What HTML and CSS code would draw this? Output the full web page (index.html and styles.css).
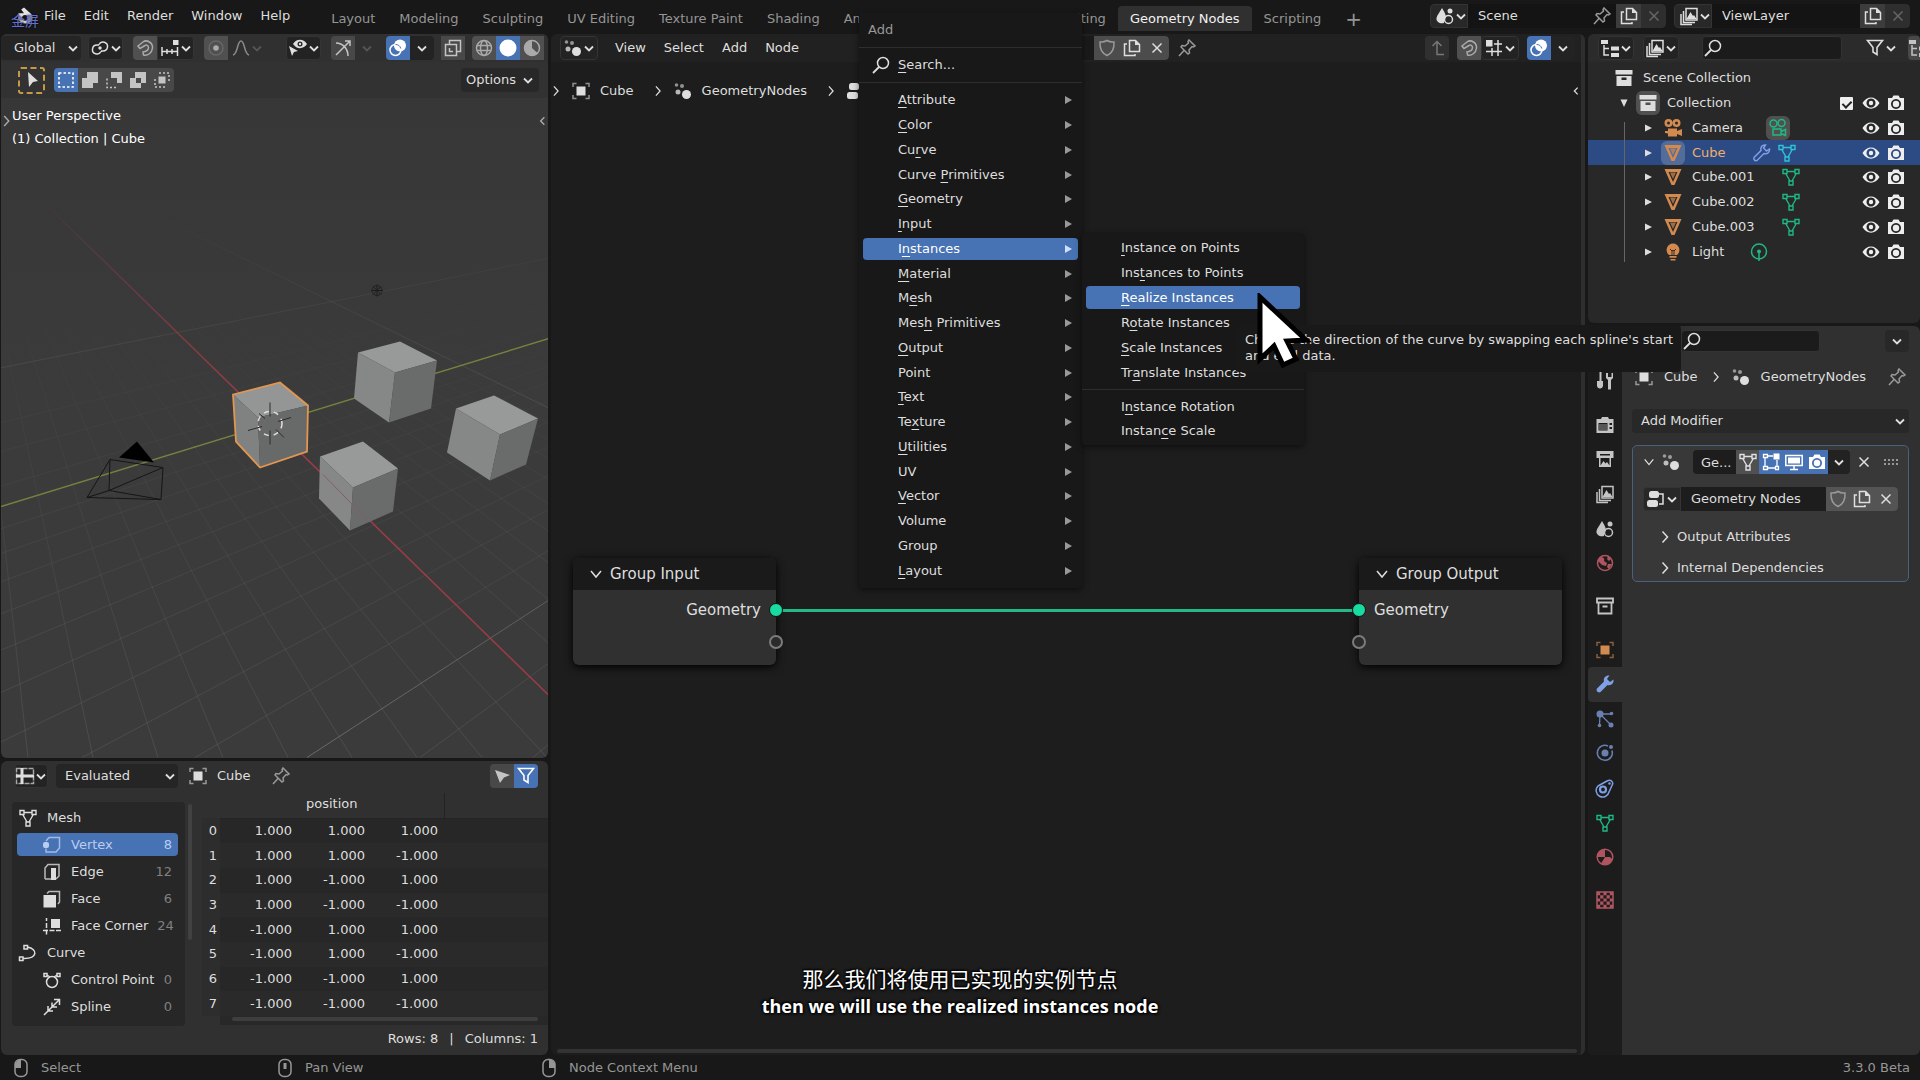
FILE: index.html
```html
<!DOCTYPE html>
<html lang="en">
<head>
<meta charset="utf-8">
<title>Geometry Nodes</title>
<link rel="stylesheet" href="styles.css">
</head>
<body>
<svg class="sprite" aria-hidden="true">
  <symbol id="chev" viewBox="0 0 12 20"><path d="M2 8.500l4 4 4-4" stroke-width="1.800"/></symbol>
  <symbol id="right" viewBox="0 0 12 20"><path d="M3.500 4.500L8.500 10l-5 5.500" stroke-width="1.500"/></symbol>
  <symbol id="left" viewBox="0 0 12 20"><path d="M8 6l-4 4 4 4" stroke-width="1.500"/></symbol>
  <symbol id="down" viewBox="0 0 14 20"><path d="M2 7l5 6 5-6" stroke-width="1.500"/></symbol>
  <symbol id="tri" viewBox="0 0 10 20"><path class="f" d="M1 6.500l7 3.500-7 3.500z"/></symbol>
  <symbol id="trid" viewBox="0 0 10 20"><path class="f" d="M1.500 6.500h7L5 14z"/></symbol>
  <symbol id="x" viewBox="0 0 20 20"><path d="M5.500 5.500l9 9M14.500 5.500l-9 9"/></symbol>
  <symbol id="copy" viewBox="0 0 20 20"><path d="M7.500 2.500h6l4 4v7h-10zM5 6H2.500v11.500H13V16"/><path class="f" d="M13 2v5h5z"/></symbol>
  <symbol id="shield" viewBox="0 0 20 20"><path d="M10 2.500c2 1.300 4.500 1.700 7 1.500.4 6-1.500 11-7 13.500C4.500 15 2.600 10 3 4c2.500.200 5-.200 7-1.500z"/></symbol>
  <symbol id="pin" viewBox="0 0 20 20"><path d="M12 2l6 6-1.500 1-1.500-.5-3 3.500.5 3-1.500 1-7-7 1-1.500 3 .5 3.500-3-.5-1.500zM7 12.500L2 18"/></symbol>
  <symbol id="mag" viewBox="0 0 20 20"><circle cx="12" cy="8" r="5.500"/><path d="M8 12l-6 6" stroke-width="1.800"/></symbol>
  <symbol id="link" viewBox="0 0 20 20"><path d="M9 6.500a4.500 4.500 0 1 1 4 6.500h-2M11 13.500a4.500 4.500 0 1 1-4-6.500h2"/><circle class="f" cx="10" cy="10" r="1.700"/></symbol>
  <symbol id="magnet" viewBox="0 0 20 20"><path d="M3 8l5-4c4-3 10 1 9.500 6-.5 5-5 8-9 7l-.5-3c3 0 5.500-2 5.500-4.500 0-2-2-3-3.500-2L5 10.500zM8 14l.5 3"/></symbol>
  <symbol id="snapinc" viewBox="0 0 20 20"><path d="M2 9v9M7 11v5M12 11v5M17.500 9v9M2 13.500h15.500"/><path class="f" d="M13 2h5.500v5H13z"/></symbol>
  <symbol id="prop" viewBox="0 0 20 20"><circle class="f" cx="10" cy="10" r="2.800"/><circle cx="10" cy="10" r="7" opacity=".25"/></symbol>
  <symbol id="bell" viewBox="0 0 20 20"><path d="M2 17c5-1 4-14 8-14s3 13 8 14"/></symbol>
  <symbol id="eyecur" viewBox="0 0 20 20"><path class="f" d="M5 6c3-5 10-6 14 0-3 5-10 6-14 0zM1 8l9 5-4 1-2 4z"/><circle class="hole" cx="12" cy="6" r="2.500"/><circle class="f" cx="12" cy="6" r="1.200"/></symbol>
  <symbol id="gizmo" viewBox="0 0 20 20"><path d="M3 5c7 0 12 6 12 13M3 17L17 3M12 3h5v5"/></symbol>
  <symbol id="overlay" viewBox="0 0 20 20"><circle cx="7.500" cy="12" r="5.500"/><circle class="f" cx="12" cy="7.500" r="6"/><path class="cutline" d="M12.800 10.500A5.500 5.500 0 0 0 7.500 6.500"/></symbol>
  <symbol id="xray" viewBox="0 0 20 20"><path d="M2.500 6.500h11v11h-11zM6.500 6V2.500h11v11H14M6.500 10v3.500H10"/></symbol>
  <symbol id="wire" viewBox="0 0 20 20"><circle cx="10" cy="10" r="7.500"/><ellipse cx="10" cy="10" rx="3.500" ry="7.500"/><path d="M3 7.500h14M3 12.500h14"/></symbol>
  <symbol id="solid" viewBox="0 0 20 20"><circle class="f" cx="10" cy="10" r="8.500"/></symbol>
  <symbol id="mat" viewBox="0 0 20 20"><circle cx="10" cy="10" r="7.500"/><path class="f" d="M10 2a8 8 0 1 0 6 13.500L10 10z"/></symbol>
  <symbol id="cursor" viewBox="0 0 20 20"><path class="f" d="M6 2l10 9-5 1-4 5z"/></symbol>
  <symbol id="cursorl" viewBox="0 0 20 20"><path class="f" d="M3 4l15 5-6 2.500L8 17z"/></symbol>
  <symbol id="selset" viewBox="0 0 20 20"><path d="M3 3h14v14H3z" stroke-dasharray="2.500 2" stroke-width="1.600"/></symbol>
  <symbol id="seladd" viewBox="0 0 20 20"><path class="f" d="M7 2h11v11h-5v5H2V8h5z"/></symbol>
  <symbol id="selsub" viewBox="0 0 20 20"><path class="f" d="M7 2h11v11h-5V8H7z"/><path d="M3 8.500v9h10" stroke-dasharray="2 2"/></symbol>
  <symbol id="seldif" viewBox="0 0 20 20"><path class="f" fill-rule="evenodd" d="M7 2h11v11h-5v5H2V8h5zM8 8v5h5V8z"/></symbol>
  <symbol id="selint" viewBox="0 0 20 20"><path class="f" d="M6.500 6.500h7v7h-7z"/><path d="M7 3h10v10M13 17H3V7" stroke-dasharray="2 2"/></symbol>
  <symbol id="geo" viewBox="0 0 20 20"><circle class="f" cx="13.500" cy="13.500" r="4.500"/><circle class="f" cx="5" cy="11" r="2.500" opacity=".8"/><circle class="f" cx="9" cy="5" r="2" opacity=".6"/><circle class="f" cx="3.500" cy="4" r="1.800" opacity=".6"/></symbol>
  <symbol id="obj" viewBox="0 0 20 20"><path class="f" d="M5.500 5.500h9v9h-9z"/><path d="M2 6V2.500h3.500M14.500 2.500H18V6M18 14v3.500h-3.500M5.500 17.500H2V14" opacity=".6"/></symbol>
  <symbol id="tree" viewBox="0 0 20 20"><rect class="f" x="3" y="2" width="10" height="7" rx="2.500"/><rect class="f" x="1" y="11" width="11" height="7" rx="2.500"/><path d="M13 5h4v10h-4"/></symbol>
  <symbol id="up" viewBox="0 0 20 20"><path d="M17 16.500h-7V4M5.500 8L10 3.500 14.500 8"/></symbol>
  <symbol id="snapgrid" viewBox="0 0 20 20"><path d="M2 13.500h16M8 10v8M14 2v16M10 6h8"/><path class="f" d="M2 2h6.500v6.500H2z"/></symbol>
  <symbol id="scene" viewBox="0 0 20 20"><path class="f" d="M7 2c3 5 4 7 4 9.500A6 6 0 0 0 9 17c-4 1-8-1-7.500-5C2 9 5 6 7 2z"/><circle class="f" cx="15" cy="5" r="2.500"/><circle cx="13.500" cy="13.500" r="4"/></symbol>
  <symbol id="layers" viewBox="0 0 20 20"><path d="M7 2.500h11V14H7zM4.500 5v11.500H16M2 8v10.500h11"/><path class="f" d="M7.500 13l4-7 2.500 4 1-1 2.500 4z"/></symbol>
  <symbol id="outl" viewBox="0 0 20 20"><path class="f" d="M1 2h7v4H1zM11 8.500h8v4h-8zM11 15h8v4h-8z"/><path d="M4 7v10h5M4 10.500h5"/></symbol>
  <symbol id="funnel" viewBox="0 0 20 20"><path d="M2.500 2.500h15L12 9.500v7L8 14V9.500z" stroke-width="1.600"/></symbol>
  <symbol id="box" viewBox="0 0 20 20"><path class="f" fill-rule="evenodd" d="M1.500 2h17v4.500h-17zM2.500 8h15v10h-15zM7.500 9.500V12h5V9.500z"/></symbol>
  <symbol id="boxo" viewBox="0 0 20 20"><path d="M2 2.500h16v4H2zM3.500 7v10.500h13V7M7.500 10.500h5" stroke-width="1.800"/></symbol>
  <symbol id="movie" viewBox="0 0 20 20"><path class="f" fill-rule="evenodd" d="M5.500 1a4 4 0 1 0 0 8 4 4 0 1 0 0-8zm0 2.500a1.500 1.500 0 1 1 0 3 1.500 1.500 0 1 1 0-3zM13.500 1a4 4 0 1 0 0 8 4 4 0 1 0 0-8zm0 2.500a1.500 1.500 0 1 1 0 3 1.500 1.500 0 1 1 0-3zM5 10.500h9v2.500l5-2v7l-5-2v2.500H5v-3L2 15v-2h3z"/></symbol>
  <symbol id="movieo" viewBox="0 0 20 20"><circle cx="5.500" cy="5.500" r="3.500"/><circle cx="13.500" cy="5" r="3.500"/><path d="M5 11h8v6H5zM13 13.500l4.500-2v6l-4.500-2"/></symbol>
  <symbol id="vee" viewBox="0 0 20 20"><path class="f" fill-rule="evenodd" d="M1.500 2h17L11.500 18h-3zM5.500 5l4.500 10 4.500-10z"/><path class="f" opacity=".7" d="M7 5.500h6L10 12z"/></symbol>
  <symbol id="mesh" viewBox="0 0 20 20"><path d="M2 2.500h4v4H2zM14 2.500h4v4h-4zM8 14h4v4H8zM6 4.500h8M5 7l4 7M15 7l-4 7" stroke-width="1.400"/></symbol>
  <symbol id="bulb" viewBox="0 0 20 20"><path class="f" d="M10 1.500a6.500 6.500 0 0 1 4 11.500H6a6.500 6.500 0 0 1 4-11.500zM6.500 14h7v1.800h-7zM7.500 17h5v1.500h-5z"/><path class="dk" d="M7 7l2 2 1-1 1 1 2-2M9 9v4M11 9v4"/></symbol>
  <symbol id="lightd" viewBox="0 0 20 20"><circle cx="10" cy="9.500" r="7.500"/><circle class="f" cx="10" cy="9.500" r="2"/><path d="M10 10v9"/></symbol>
  <symbol id="wrencho" viewBox="0 0 20 20"><path d="M17.500 6l-3 2-3-3 2-3c-3-.5-5.500 2-4.500 5.500l-7 7c-1 2 1.500 4 3 3l7-7c3.500 1 6-1.500 5.500-4.500z"/></symbol>
  <symbol id="wrench" viewBox="0 0 20 20"><path class="f" d="M18.500 5.500l-3.500 2.500-3-3L14.500 1.500c-3.500-.5-6.500 2-5.500 6l-7 7c-1.500 2.500 1.500 5 3.500 3.500l7-7c4 1 6.500-2 6-5.500z"/></symbol>
  <symbol id="eye" viewBox="0 0 20 20"><path class="f" fill-rule="evenodd" d="M1.500 10c4-7.500 13-7.500 17 0-4 7.500-13 7.500-17 0zM10 5.500a4.500 4.500 0 1 0 .01 0z"/><circle class="f" cx="10" cy="10" r="2.200"/></symbol>
  <symbol id="cam" viewBox="0 0 20 20"><path class="f" fill-rule="evenodd" d="M2 5h4l1.500-2.500h5L14 5h4v12H2zM10 6a5 5 0 1 0 .01 0z"/><circle class="f" cx="10" cy="11" r="3.200"/></symbol>
  <symbol id="tool" viewBox="0 0 20 20"><path class="f" d="M5 1h1.500v9H8v4.500c0 4-6 4-6 0V10h2.500V1zM11 2v5l2 2v9.500h3V9l2-2V2l-1.500 0v4h-3.500V2z"/></symbol>
  <symbol id="render" viewBox="0 0 20 20"><path class="f" fill-rule="evenodd" d="M6 4l1-2h6l1 2h4.500v14h-17V4zM3.500 8v7.500h9V8zM14.500 8v2H17V8zM14.500 12v2H17v-2z"/><path d="M4 10h8M4 12h8M4 14h8" stroke-width=".7"/></symbol>
  <symbol id="output" viewBox="0 0 20 20"><path class="f" fill-rule="evenodd" d="M1.500 2h17v7h-2.500v9H4V9H1.500zM5.500 9v7.500l3-4.500 2 2.500 1.500-1.500 2.500 3.500V9zM5 5v1.500h10V5z"/></symbol>
  <symbol id="world" viewBox="0 0 20 20"><circle cx="10" cy="10" r="7.500"/><path class="f" d="M5 4c3 0 5 1 4 4l3 2-1 3-4-1-4-4zM13 3l3 3-2 2-2-2zM13 11l4 0-3 5-2-2z"/></symbol>
  <symbol id="part" viewBox="0 0 20 20"><circle class="f" cx="5" cy="5" r="3.500"/><circle class="f" cx="16.500" cy="4.500" r="1.800"/><circle class="f" cx="4.500" cy="16.500" r="1.800"/><circle class="f" cx="16" cy="16" r="2.500"/><path d="M5 5h11M5 5l-.5 11M5 5l11 11" stroke-width="1.300"/></symbol>
  <symbol id="phys" viewBox="0 0 20 20"><path d="M13 3a7.500 7.500 0 1 0 4 4.500"/><circle class="f" cx="10" cy="10" r="3.500"/><circle class="f" cx="16" cy="4" r="2"/></symbol>
  <symbol id="cons" viewBox="0 0 20 20"><path d="M3 8l9-5c4-2 7 1 5 4.500L14 14A6.500 6.500 0 1 1 3 8z"/><circle cx="8" cy="11.500" r="3" stroke-width="2.200"/><circle class="f" cx="14.500" cy="5.500" r="1.200"/></symbol>
  <symbol id="matb" viewBox="0 0 20 20"><circle cx="10" cy="10" r="7.800"/><path class="f" d="M10 2v8H2c0-5 4-8 8-8zM10 10h5l2.500 2.500C16 16 13 18 10 18zM10 10v8l-4-1.500z"/></symbol>
  <symbol id="tex" viewBox="0 0 20 20"><path d="M2 2h16v16H2z"/><path class="f" d="M2 2h3.200v3.200H2zM8.400 2h3.200v3.200H8.400zM14.800 2H18v3.200h-3.200zM5.200 5.200h3.200v3.200H5.200zM11.600 5.200h3.200v3.200h-3.200zM2 8.400h3.200v3.200H2zM8.400 8.400h3.200v3.200H8.400zM14.800 8.400H18v3.200h-3.200zM5.200 11.600h3.200v3.200H5.200zM11.600 11.600h3.200v3.200h-3.200zM2 14.800h3.200V18H2zM8.400 14.800h3.200V18H8.400zM14.800 14.800H18V18h-3.200z"/></symbol>
  <symbol id="edit" viewBox="0 0 20 20"><path d="M2.500 2.500h4v3h-4zM2.500 14.500h4v3h-4zM14.500 14.500h3v3h-3zM4 5.500v9M6.500 16h8M16 14V8M6.500 4H12" stroke-width="1.300"/><path class="f" d="M12.500 1.500h6v6h-6z"/></symbol>
  <symbol id="screen" viewBox="0 0 20 20"><path d="M1.800 3.500h16.400v10H1.800zM10 13.500V17M6 17.500h8"/><path class="f" d="M4 5.500h12v6H4z"/></symbol>
  <symbol id="sheet" viewBox="0 0 20 20"><path d="M1.500 2.500h17v15h-17z" opacity=".7" stroke-dasharray="5 1"/><path class="f" d="M5.500 2h3v16h-3zM1 8.500h18v3H1z"/></symbol>
  <symbol id="vert" viewBox="0 0 20 20"><path d="M4 6l3-3.500h10.500V13L14 17H4v-3.500" opacity=".8"/><rect class="f" x="1" y="7" width="6" height="6" rx="2"/></symbol>
  <symbol id="edge" viewBox="0 0 20 20"><path d="M3 17V6l3-3.500h11V14l-3 3M3 17h6" opacity=".8"/><path class="f" d="M9 6h5v12H9z" /></symbol>
  <symbol id="face" viewBox="0 0 20 20"><path class="f" d="M1.500 6H14v12.500H1.500z"/><path d="M5 4.500l2-2h10.500V13L16 15" opacity=".8"/></symbol>
  <symbol id="corner" viewBox="0 0 20 20"><path class="f" d="M9 3h9v9H9z"/><path d="M4.500 2v3M4.500 7v12M1 14.500h18" stroke-dasharray="5 1.500"/></symbol>
  <symbol id="curve" viewBox="0 0 20 20"><path d="M6 2.500h3.500V6H6zM1.500 14H5v3.500H1.500zM9.500 4C20 6 20 16 5 15.500" stroke-width="1.500"/></symbol>
  <symbol id="cp" viewBox="0 0 20 20"><circle cx="10" cy="12" r="5.500"/><path d="M2 3.500h3v3H2zM15 3.500h3v3h-3zM5 5l3 2M15 5l-3 2"/></symbol>
  <symbol id="spline" viewBox="0 0 20 20"><path d="M2 18L17.500 2.500M12 2.500h5.500V8M6 9v5h5M10 5.500V10h5"/></symbol>
  <symbol id="mouse" viewBox="0 0 20 20"><rect x="4" y="1.500" width="12" height="17" rx="5"/></symbol>
</svg>

<header class="topbar">
  <div class="logo">
    <svg viewBox="0 0 30 24"><path d="M9 9h6l-3-4 3-2 8 7c3 5 0 10-6 10S8 16 9 13z" fill="#e4e4e4"/><circle cx="16" cy="14" r="3" fill="#161616"/></svg>
    <span class="mark">金屏</span>
  </div>
  <nav class="menus"><button>File</button><button>Edit</button><button>Render</button><button>Window</button><button>Help</button></nav>
  <nav class="tabs"><button>Layout</button><button>Modeling</button><button>Sculpting</button><button>UV Editing</button><button>Texture Paint</button><button>Shading</button><button>Animation</button><button>Rendering</button><button>Compositing</button><button class="on">Geometry Nodes</button><button>Scripting</button><button class="plus">+</button></nav>
  <div class="idgroup">
    <button class="ib"><svg class="ic"><use href="#scene"/></svg><svg class="ch"><use href="#chev"/></svg></button>
    <label class="fld"><input value="Scene" aria-label="Scene name"><svg class="ic dim"><use href="#pin"/></svg></label>
    <button class="sq"><svg class="ic"><use href="#copy"/></svg></button><button class="sq off end"><svg class="ic"><use href="#x"/></svg></button>
  </div>
  <div class="idgroup">
    <button class="ib"><svg class="ic"><use href="#layers"/></svg><svg class="ch"><use href="#chev"/></svg></button>
    <label class="fld"><input value="ViewLayer" aria-label="View layer name"></label>
    <button class="sq"><svg class="ic"><use href="#copy"/></svg></button><button class="sq off end"><svg class="ic"><use href="#x"/></svg></button>
  </div>
</header>

<main class="work">
  <div class="col leftcol">
    <section class="area view3d">
      <svg class="world3d" viewBox="0 33 547 725" preserveAspectRatio="xMidYMid slice">
        <defs>
          <linearGradient id="gw" gradientUnits="userSpaceOnUse" x1="0" y1="280" x2="0" y2="757"><stop offset="0" stop-color="#777" stop-opacity="0"/><stop offset=".4" stop-color="#777" stop-opacity=".1"/><stop offset="1" stop-color="#777" stop-opacity=".28"/></linearGradient>
          <linearGradient id="gm" gradientUnits="userSpaceOnUse" x1="0" y1="200" x2="0" y2="757"><stop offset="0" stop-color="#888" stop-opacity="0"/><stop offset="1" stop-color="#888" stop-opacity=".6"/></linearGradient>
          <linearGradient id="gr" gradientUnits="userSpaceOnUse" x1="0" y1="200" x2="0" y2="400"><stop offset="0" stop-color="#a03a48" stop-opacity="0"/><stop offset="1" stop-color="#a03a48"/></linearGradient>
        </defs>
        <g fill="none" stroke-width="1">
          <path stroke="url(#gw)" d="M-43 118L27 757M-43 118L92 757M-43 118L157 757M-43 118L222 757M-43 118L287 757M-43 118L351 757M-43 118L416 757M-43 118L481 757M-43 118L546 757M-43 118L676 757M-43 118L741 757M-43 118L806 757M-43 118L871 757M-43 118L936 757M-43 118L1001 757M-43 118L1066 757M-43 118L1131 757M-43 118L1196 757"/>
          <path stroke="url(#gw)" d="M1306 106L-1384 757M1306 106L-1159 757M1306 106L-934 757M1306 106L-708 757M1306 106L-596 757M1306 106L-483 757M1306 106L-370 757M1306 106L-258 757M1306 106L-145 757M1306 106L-32 757M1306 106L81 757M1306 106L194 757M1306 106L419 757M1306 106L532 757"/>
          <path stroke="url(#gm)" d="M1306 106L306 757M1306 106L-1948 757M-43 118L1261 757"/>
          <path stroke="#73823f" stroke-width="1.500" d="M0 506L548 338"/>
          <path stroke="url(#gr)" stroke-width="1.500" d="M0 160L548 695"/>
          <path stroke="#1c1c1c" d="M376 284v12M370 290h12M372 286l8 8M380 286l-8 8"/><circle cx="376" cy="290" r="5" stroke="#222"/>
        </g>
        <g stroke="none">
          <path fill="#989a9a" d="M357 352l42-11 37 19-42 12z"/><path fill="#868888" d="M357 352l37 20-6 50-35-24z"/><path fill="#6a6c6b" d="M394 372l42-12-6 48-42 14z"/>
          <path fill="#989a9a" d="M455 408l38-13 44 23-38 16z"/><path fill="#868888" d="M455 408l44 26-10 46-43-28z"/><path fill="#6a6c6b" d="M499 434l38-16-12 46-36 16z"/>
          <path fill="#989a9a" d="M319 456l43-15 35 27-45 19z"/><path fill="#868888" d="M319 456l33 31-3 43-31-32z"/><path fill="#6a6c6b" d="M352 487l45-19-5 43-43 19z"/>
          <path stroke="#8c5a60" fill="none" d="M322 474l44 45" stroke-width="1"/>
          <path fill="#949696" d="M232 394l47-12 28 23-50 12z"/><path fill="#808282" d="M232 394l25 23 2 50-24-26z"/><path fill="#686a6a" d="M257 417l50-12-1 46-47 16z"/>
          <path fill="none" stroke="#e39650" stroke-width="1.800" d="M232 394l47-12 28 23-1 46-47 16-24-26z"/>
          <circle cx="269" cy="423" r="12" fill="none" stroke="#e8dcdc" stroke-width="1.500" stroke-dasharray="5 5"/>
          <path stroke="#2a2a2a" stroke-width="1" d="M269 402v14M269 430v14M247 430l14-4M277 421l13-4M258 413l6 5M275 429l8 8"/>
          <path fill="#000" d="M136 441l-18 16 35 5z"/>
          <path fill="none" stroke="#151515" stroke-width="1" d="M109 459l53 8-2 32-74-2zM109 459l-1 31-22 7M108 490l52 9M108 490l54-23"/>
        </g>
      </svg>
      <div class="hdr">
        <label class="dd"><select aria-label="Transform orientation"><option>Global</option></select><svg class="ch"><use href="#chev"/></svg></label>
        <button class="ib"><svg class="ic"><use href="#link"/></svg><svg class="ch"><use href="#chev"/></svg></button>
        <span class="grp snap"><button class="sq gy"><svg class="ic"><use href="#magnet"/></svg></button><button class="ib"><svg class="ic"><use href="#snapinc"/></svg><svg class="ch"><use href="#chev"/></svg></button></span>
        <span class="grp prop"><button class="sq gy"><svg class="ic"><use href="#prop"/></svg></button><button class="ib plain dimmer"><svg class="ic"><use href="#bell"/></svg><svg class="ch faint"><use href="#chev"/></svg></button></span>
        <button class="ib vis"><svg class="ic"><use href="#eyecur"/></svg><svg class="ch"><use href="#chev"/></svg></button>
        <span class="grp"><button class="sq gz"><svg class="ic"><use href="#gizmo"/></svg></button><button class="cb plain faint"><svg class="ch"><use href="#chev"/></svg></button></span>
        <span class="grp ovl"><button class="sq bl"><svg class="ic"><use href="#overlay"/></svg></button><button class="cb"><svg class="ch"><use href="#chev"/></svg></button></span>
        <button class="sq gz"><svg class="ic"><use href="#xray"/></svg></button>
        <span class="grp shade"><button class="sq gy"><svg class="ic"><use href="#wire"/></svg></button><button class="sq bl"><svg class="ic"><use href="#solid"/></svg></button><button class="sq gy"><svg class="ic"><use href="#mat"/></svg></button></span>
      </div>
      <div class="tools">
        <button class="tweak"><svg class="ic"><use href="#cursor"/></svg></button>
        <span class="grp"><button class="sq bl"><svg class="ic"><use href="#selset"/></svg></button><button class="sq gz"><svg class="ic"><use href="#seladd"/></svg></button><button class="sq gz"><svg class="ic"><use href="#selsub"/></svg></button><button class="sq gz"><svg class="ic"><use href="#seldif"/></svg></button><button class="sq gz"><svg class="ic"><use href="#selint"/></svg></button></span>
        <button class="opt">Options<svg class="ch"><use href="#chev"/></svg></button>
      </div>
      <div class="persp"><svg class="ch"><use href="#right"/></svg><p>User Perspective<br>(1) Collection | Cube</p><svg class="ch"><use href="#left"/></svg></div>
    </section>

    <section class="area sheet">
      <div class="hdr">
        <button class="ib"><svg class="ic"><use href="#sheet"/></svg><svg class="ch"><use href="#chev"/></svg></button>
        <label class="dd"><select aria-label="Object evaluation state"><option>Evaluated</option></select><svg class="ch"><use href="#chev"/></svg></label>
        <svg class="ic"><use href="#obj"/></svg><span>Cube</span><svg class="ic dim pin"><use href="#pin"/></svg>
        <span class="grp last"><button class="sq gz"><svg class="ic"><use href="#cursorl"/></svg></button><button class="sq bl"><svg class="ic"><use href="#funnel"/></svg></button></span>
      </div>
      <div class="sheetbody">
        <ul class="domains">
          <li><svg class="ic"><use href="#mesh"/></svg>Mesh</li>
          <li class="sub sel"><svg class="ic"><use href="#vert"/></svg>Vertex<b>8</b></li>
          <li class="sub"><svg class="ic"><use href="#edge"/></svg>Edge<b>12</b></li>
          <li class="sub"><svg class="ic"><use href="#face"/></svg>Face<b>6</b></li>
          <li class="sub"><svg class="ic"><use href="#corner"/></svg>Face Corner<b>24</b></li>
          <li><svg class="ic"><use href="#curve"/></svg>Curve</li>
          <li class="sub"><svg class="ic"><use href="#cp"/></svg>Control Point<b>0</b></li>
          <li class="sub"><svg class="ic"><use href="#spline"/></svg>Spline<b>0</b></li>
        </ul>
        <i class="vbar"></i>
        <div class="data">
          <table>
            <colgroup><col class="idx"><col><col class="num"><col class="num"><col class="rest"></colgroup>
            <thead><tr><th></th><th colspan="3" class="pos">position</th><th class="line"></th></tr></thead>
            <tbody>
              <tr><th>0</th><td>1.000</td><td>1.000</td><td>1.000</td><td></td></tr>
              <tr><th>1</th><td>1.000</td><td>1.000</td><td>-1.000</td><td></td></tr>
              <tr><th>2</th><td>1.000</td><td>-1.000</td><td>1.000</td><td></td></tr>
              <tr><th>3</th><td>1.000</td><td>-1.000</td><td>-1.000</td><td></td></tr>
              <tr><th>4</th><td>-1.000</td><td>1.000</td><td>1.000</td><td></td></tr>
              <tr><th>5</th><td>-1.000</td><td>1.000</td><td>-1.000</td><td></td></tr>
              <tr><th>6</th><td>-1.000</td><td>-1.000</td><td>1.000</td><td></td></tr>
              <tr><th>7</th><td>-1.000</td><td>-1.000</td><td>-1.000</td><td></td></tr>
            </tbody>
          </table>
          <div class="under"><i class="hbar"></i></div>
        </div>
      </div>
      <div class="foot"><span>Rows: 8</span><span>|</span><span>Columns: 1</span></div>
    </section>
  </div>

  <section class="area nodes">
    <div class="hdr">
      <button class="ib"><svg class="ic"><use href="#geo"/></svg><svg class="ch"><use href="#chev"/></svg></button>
      <nav class="menus"><button>View</button><button>Select</button><button>Add</button><button>Node</button></nav>
      <div class="idgroup tight"><label class="fld"><input aria-label="Node tree"></label><button class="sq"><svg class="ic dim"><use href="#shield"/></svg></button><button class="sq"><svg class="ic"><use href="#copy"/></svg></button><button class="sq end"><svg class="ic"><use href="#x"/></svg></button></div>
      <svg class="ic dim"><use href="#pin"/></svg>
      <button class="sq upb"><svg class="ic"><use href="#up"/></svg></button>
      <span class="grp"><button class="sq gy"><svg class="ic"><use href="#magnet"/></svg></button><button class="ib"><svg class="ic"><use href="#snapgrid"/></svg><svg class="ch"><use href="#chev"/></svg></button></span>
      <span class="grp"><button class="sq bl"><svg class="ic"><use href="#overlay"/></svg></button><button class="cb"><svg class="ch"><use href="#chev"/></svg></button></span>
    </div>
    <div class="crumbs"><svg class="ch"><use href="#right"/></svg><svg class="ic"><use href="#obj"/></svg><span>Cube</span><svg class="ch"><use href="#right"/></svg><svg class="ic"><use href="#geo"/></svg><span>GeometryNodes</span><svg class="ch"><use href="#right"/></svg><svg class="ic"><use href="#tree"/></svg><svg class="ch tail"><use href="#left"/></svg></div>
    <div class="canvas">
      <i class="wireline"></i>
      <article class="node in"><h3><svg><use href="#down"/></svg>Group Input</h3><p>Geometry</p><i class="sock"></i><i class="sock empty"></i></article>
      <article class="node out"><h3><svg><use href="#down"/></svg>Group Output</h3><p>Geometry</p><i class="sock"></i><i class="sock empty"></i></article>
    </div>
    <i class="hbar"></i>
  </section>

  <div class="col rightcol">
    <section class="area outliner">
      <div class="hdr">
        <button class="ib"><svg class="ic"><use href="#outl"/></svg><svg class="ch"><use href="#chev"/></svg></button>
        <button class="ib"><svg class="ic"><use href="#layers"/></svg><svg class="ch"><use href="#chev"/></svg></button>
        <label class="search"><svg class="ic"><use href="#mag"/></svg><input aria-label="Filter outliner"></label>
        <button class="ib plain"><svg class="ic"><use href="#funnel"/></svg><svg class="ch"><use href="#chev"/></svg></button>
        <button class="sq gz cut"><svg class="ic"><use href="#outl"/></svg></button>
      </div>
      <ul class="olist">
        <li class="l0"><svg class="ic"><use href="#box"/></svg><span>Scene Collection</span></li>
        <li class="l1"><svg class="tr"><use href="#trid"/></svg><svg class="ic pill"><use href="#box"/></svg><span>Collection</span><span class="tog"><input type="checkbox" checked aria-label="Enable collection"><svg class="ic"><use href="#eye"/></svg><svg class="ic"><use href="#cam"/></svg></span></li>
        <li class="l2"><svg class="tr"><use href="#tri"/></svg><svg class="ic or"><use href="#movie"/></svg><span>Camera</span><svg class="ic gr pill d1"><use href="#movieo"/></svg><span class="tog"><svg class="ic"><use href="#eye"/></svg><svg class="ic"><use href="#cam"/></svg></span></li>
        <li class="l2 sel"><svg class="tr"><use href="#tri"/></svg><svg class="ic or pill"><use href="#vee"/></svg><span>Cube</span><svg class="ic wr d2"><use href="#wrencho"/></svg><svg class="ic cy"><use href="#mesh"/></svg><span class="tog"><svg class="ic"><use href="#eye"/></svg><svg class="ic"><use href="#cam"/></svg></span></li>
        <li class="l2"><svg class="tr"><use href="#tri"/></svg><svg class="ic or"><use href="#vee"/></svg><span>Cube.001</span><svg class="ic gr d2"><use href="#mesh"/></svg><span class="tog"><svg class="ic"><use href="#eye"/></svg><svg class="ic"><use href="#cam"/></svg></span></li>
        <li class="l2"><svg class="tr"><use href="#tri"/></svg><svg class="ic or"><use href="#vee"/></svg><span>Cube.002</span><svg class="ic gr d2"><use href="#mesh"/></svg><span class="tog"><svg class="ic"><use href="#eye"/></svg><svg class="ic"><use href="#cam"/></svg></span></li>
        <li class="l2"><svg class="tr"><use href="#tri"/></svg><svg class="ic or"><use href="#vee"/></svg><span>Cube.003</span><svg class="ic gr d2"><use href="#mesh"/></svg><span class="tog"><svg class="ic"><use href="#eye"/></svg><svg class="ic"><use href="#cam"/></svg></span></li>
        <li class="l2"><svg class="tr"><use href="#tri"/></svg><svg class="ic or"><use href="#bulb"/></svg><span>Light</span><svg class="ic gr d1"><use href="#lightd"/></svg><span class="tog"><svg class="ic"><use href="#eye"/></svg><svg class="ic"><use href="#cam"/></svg></span></li>
      </ul>
    </section>
    <section class="area props">
      <nav class="ptabs">
        <button class="t0"><svg class="ic"><use href="#tool"/></svg></button>
        <div class="pg five"><button><svg class="ic"><use href="#render"/></svg></button><button><svg class="ic"><use href="#output"/></svg></button><button><svg class="ic"><use href="#layers"/></svg></button><button><svg class="ic"><use href="#scene"/></svg></button><button class="rd"><svg class="ic"><use href="#world"/></svg></button></div>
        <div class="pg"><button><svg class="ic"><use href="#boxo"/></svg></button></div>
        <div class="pg seven"><button class="or"><svg class="ic"><use href="#obj"/></svg></button><button class="wr on"><svg class="ic"><use href="#wrench"/></svg></button><button class="ph"><svg class="ic"><use href="#part"/></svg></button><button class="ph"><svg class="ic"><use href="#phys"/></svg></button><button class="wr"><svg class="ic"><use href="#cons"/></svg></button><button class="gr"><svg class="ic"><use href="#mesh"/></svg></button><button class="rd"><svg class="ic"><use href="#matb"/></svg></button></div>
        <div class="pg"><button class="rd"><svg class="ic"><use href="#tex"/></svg></button></div>
      </nav>
      <div class="pmain">
        <div class="phead"><label class="search"><svg class="ic"><use href="#mag"/></svg><input aria-label="Search properties"></label><button class="cb"><svg class="ch"><use href="#chev"/></svg></button></div>
        <div class="crumbs"><svg class="ic"><use href="#obj"/></svg><span>Cube</span><svg class="ch"><use href="#right"/></svg><svg class="ic"><use href="#geo"/></svg><span>GeometryNodes</span><svg class="ic dim tail"><use href="#pin"/></svg></div>
        <button class="addmod">Add Modifier<svg class="ch"><use href="#chev"/></svg></button>
        <div class="panel">
          <div class="prow first"><svg class="ch"><use href="#down"/></svg><svg class="ic g1"><use href="#geo"/></svg><input class="nm" value="Ge..." aria-label="Modifier name"><button class="sq gy lit"><svg class="ic"><use href="#mesh"/></svg></button><button class="sq bl"><svg class="ic"><use href="#edit"/></svg></button><button class="sq bl"><svg class="ic"><use href="#screen"/></svg></button><button class="sq bl"><svg class="ic"><use href="#cam"/></svg></button><button class="cb"><svg class="ch"><use href="#chev"/></svg></button><button class="close"><svg class="ic"><use href="#x"/></svg></button><i class="grip"></i></div>
          <div class="idgroup"><button class="ib"><svg class="ic"><use href="#tree"/></svg><svg class="ch"><use href="#chev"/></svg></button><label class="fld"><input value="Geometry Nodes" aria-label="Node group"></label><button class="sq"><svg class="ic dim"><use href="#shield"/></svg></button><button class="sq"><svg class="ic"><use href="#copy"/></svg></button><button class="sq end"><svg class="ic"><use href="#x"/></svg></button></div>
          <button class="fold"><svg class="ch"><use href="#right"/></svg>Output Attributes</button>
          <button class="fold"><svg class="ch"><use href="#right"/></svg>Internal Dependencies</button>
        </div>
      </div>
    </section>
  </div>
</main>

<footer class="status">
  <span><svg class="ic"><use href="#mouse"/><path class="f" d="M4 10V6l3-4h3v8z"/></svg>Select</span>
  <span><svg class="ic"><use href="#mouse"/><path class="f" d="M8.500 5h3v6h-3z"/></svg>Pan View</span>
  <span><svg class="ic"><use href="#mouse"/><path class="f" d="M10 2h3l3 4v4h-6z"/></svg>Node Context Menu</span>
  <span class="ver">3.3.0 Beta</span>
</footer>

<div class="popup add">
  <h2>Add</h2>
  <button class="find"><svg class="ic"><use href="#mag"/></svg><span><u>S</u>earch...</span></button>
  <ul>
    <li><span><u>A</u>ttribute</span></li><li><span><u>C</u>olor</span></li><li><span>Cu<u>r</u>ve</span></li><li><span>Curve <u>P</u>rimitives</span></li><li><span><u>G</u>eometry</span></li><li><span><u>I</u>nput</span></li><li class="on"><span>I<u>n</u>stances</span></li><li><span><u>M</u>aterial</span></li><li><span>M<u>e</u>sh</span></li><li><span>Mes<u>h</u> Primitives</span></li><li><span><u>O</u>utput</span></li><li><span>Point</span></li><li><span><u>T</u>ext</span></li><li><span>Te<u>x</u>ture</span></li><li><span><u>U</u>tilities</span></li><li><span>UV</span></li><li><span><u>V</u>ector</span></li><li><span>Volume</span></li><li><span>Group</span></li><li><span><u>L</u>ayout</span></li>
  </ul>
</div>
<div class="popup sub2">
  <ul class="six"><li><span><u>I</u>nstance on Points</span></li><li><span>Ins<u>t</u>ances to Points</span></li><li class="on"><span><u>R</u>ealize Instances</span></li><li><span>R<u>o</u>tate Instances</span></li><li><span><u>S</u>cale Instances</span></li><li><span>Tr<u>a</u>nslate Instances</span></li></ul>
  <ul class="two"><li><span>I<u>n</u>stance Rotation</span></li><li><span>Instan<u>c</u>e Scale</span></li></ul>
</div>
<div class="tip" role="tooltip">Change the direction of the curve by swapping each spline's start<br>and end data.</div>
<svg class="pointer" viewBox="0 0 56 78"><path d="M4 4v62l14-13 9 19 13-6-9-18 19-1z" fill="#fff" stroke="#000" stroke-width="5"/></svg>
<div class="caption"><p lang="zh">那么我们将使用已实现的实例节点</p><p>then we will use the realized instances node</p></div>
</body>
</html>
```
FILE: styles.css
```css
* { box-sizing: border-box; margin: 0; padding: 0; }
html, body { height: 100%; }
body {
  display: grid; grid-template-rows: 34px minmax(0, 1fr) 25px; position: relative; overflow: hidden;
  background: #181818; color: #dedede; font: 13px/16px "DejaVu Sans", "Noto Sans CJK SC", sans-serif;
}
button, input, select { font: inherit; color: inherit; background: none; border: 0; min-width: 0; outline: 0; }
ul { list-style: none; }
i { display: block; }
svg { fill: none; stroke: currentColor; stroke-width: 1.500; }
.f { fill: currentColor; stroke: none; }
.hole { fill: #222; stroke: none; }
.dk { stroke: #4a2a14; stroke-width: 1; }
.cutline { stroke: #4772b3; stroke-width: 1; }
.sprite { position: absolute; width: 0; height: 0; }
.ic { width: 20px; height: 20px; flex: none; }
.ch { width: 12px; height: 20px; flex: none; }
.dim { color: #999; }
.dimmer { color: #8a8a8a; }
.faint { color: #555; }

/* shared buttons */
.ib, .cb, .sq, .opt { display: flex; align-items: center; justify-content: center; height: 24px; flex: none; }
.ib { width: 38px; background: #232323; border: 1px solid #343434; border-radius: 4px; }
.cb { width: 24px; background: #232323; border-radius: 0 4px 4px 0; }
.plain { background: none; border-color: transparent; }
.sq { width: 24px; background: #545454; }
.gy { background: #505050; color: #aaa; }
.gz { background: #484848; color: #c4c4c4; }
.bl { background: #4772b3; color: #fff; }
.grp { display: flex; border-radius: 4px; overflow: hidden; flex: none; }
.hdr { display: flex; align-items: center; height: 28px; flex: none; position: relative; }
.area { position: relative; border-radius: 6px; overflow: hidden; min-width: 0; }

/* top bar */
.topbar { display: flex; padding: 4px 10px 0 10px; gap: 8px; background: #181818; }
.logo { position: relative; width: 26px; height: 26px; flex: none; }
.logo svg { width: 28px; height: 24px; stroke: none; }
.mark { position: absolute; left: 1px; top: 9px; font-size: 14px; color: #6670d0; white-space: nowrap; text-shadow: 0 0 2px #000; }
.menus { display: flex; gap: 18px; align-items: center; height: 24px; }
.tabs { display: flex; height: 25px; margin: 2px auto 0 21px; color: #959595; }
.tabs button { padding: 0 12px; white-space: nowrap; }
.tabs .on { background: #303030; color: #f2f2f2; border-radius: 4px 4px 0 0; }
.tabs .plus { font-size: 20px; }
.idgroup { display: flex; height: 24px; border-radius: 4px; overflow: hidden; flex: none; }
.topbar .idgroup { width: 236px; }
.topbar .ib { padding-left: 4px; }
.idgroup .ib { border-radius: 4px 0 0 4px; background: #282828; }
.fld { display: flex; align-items: center; flex: 1; min-width: 0; background: #1a1a1a; padding: 0 4px 0 10px; }
.fld input { flex: 1; width: 0; }
.topbar .fld { background: #141414; }
.topbar .sq { background: #3c3c3c; width: 25px; }
.topbar .off { color: #666; background: #2e2e2e; }
.end { border-radius: 0 4px 4px 0; }

.work { display: grid; grid-template-columns: minmax(0, 548fr) minmax(0, 1034fr) minmax(0, 332fr); gap: 3px; }
.col { display: flex; flex-direction: column; gap: 3px; min-height: 0; }

/* 3D viewport */
.view3d { flex: 724; background: linear-gradient(#363636, #3b3b3b 50%); margin-left: 1px; }
.world3d { position: absolute; inset: 0; width: 100%; height: 100%; }
.view3d .hdr { background: #303030; }
.dd { display: flex; align-items: center; height: 24px; background: #252525; border-radius: 4px; flex: none; padding-right: 2px; }
.dd select { appearance: none; flex: 1; padding-left: 13px; height: 24px; }
.view3d .dd { width: 80px; margin-right: 7px; }
.view3d .ib { width: 35px; }
.view3d .grp .ib { width: 37px; border-radius: 0 4px 4px 0; }
.snap { margin: 0 10px 0 10px; }
.vis { margin: 0 10px 0 21px; }
.view3d .ovl { margin: 0 7px; }
.shade { margin-left: 7px; border-radius: 4px 0 0 4px; }
.tools { position: relative; display: flex; align-items: center; height: 36px; padding: 0 9px 0 17px; background: #323232; }
.tweak { width: 27px; height: 27px; border: 2px dashed #c39a48; display: grid; place-items: center; margin-right: 9px; border-radius: 3px; flex: none; }
.opt { width: 78px; margin-left: auto; background: #282828; border-radius: 4px; gap: 6px; }
.persp { position: relative; display: flex; padding-top: 6px; line-height: 23px; color: #fff; }
.persp p { flex: 1; }
.persp .ch { margin-top: 7px; color: #aaa; width: 11px; }

/* spreadsheet */
.sheet { flex: 294; background: #303030; margin-left: 1px; display: flex; flex-direction: column; }
.sheet .hdr { padding: 0 10px 0 13px; margin-top: 1px; }
.sheet .ib { width: 34px; margin-right: 8px; }
.sheet .dd { width: 122px; margin-right: 10px; }
.sheet .dd select { padding-left: 9px; }
.sheet .hdr span { padding-left: 9px; }
.sheet .pin { margin-left: 20px; }
.sheet .hdr .last { margin-left: auto; padding: 0; }
.sheetbody { flex: 1; display: flex; min-height: 0; padding-top: 3px; }
.domains { width: 173px; margin: 9px 3px 0 11px; padding: 4px 7px 0 5px; background: #272727; border-radius: 4px; flex: none; height: 224px; }
.domains li { display: flex; align-items: center; height: 23px; margin-bottom: 4px; gap: 9px; border-radius: 4px; padding: 0 6px 0 1px; }
.domains .sub { padding-left: 25px; white-space: nowrap; }
.domains b { font-weight: normal; margin-left: auto; color: #808080; }
.domains .sel { background: #4772b3; color: #b9cdf0; }
.domains .sel b { color: #b9cdf0; }
.vbar { width: 4px; height: 136px; margin-top: 11px; background: #414141; border-radius: 2px; flex: none; }
.data { flex: 1; display: flex; flex-direction: column; min-width: 0; padding-left: 10px; }
table { width: 100%; height: 223px; border-collapse: collapse; table-layout: fixed; }
thead th { height: 25px; font-weight: normal; }
.idx { width: 18px; }
.num { width: 73px; }
.rest { width: 104px; }
.pos { border-right: 1px solid #222; border-bottom: 1px solid #242424; padding-bottom: 2px; }
.line { border-bottom: 1px solid #242424; }
tbody th { font-weight: normal; text-align: right; padding-right: 3px; background: #2d2d2d; }
tbody td { text-align: right; padding-right: 6px; background: #272727; }
tbody tr:nth-child(even) td { background: #2a2a2a; }
.under { flex: 1; margin-left: 18px; background: #282828; }
.under .hbar { margin: 1px 10px 0 12px; }
.hbar { height: 4px; background: #3e3e3e; border-radius: 2px; }
.foot { height: 30px; display: flex; justify-content: flex-end; gap: 11px; padding: 6px 10px 0 0; }

/* node editor */
.nodes { background: #1d1d1d; display: flex; flex-direction: column; border-right: 4px solid #2e2e2e; }
.nodes .hdr { background: #212121; padding: 0 6px 0 9px; gap: 8px; }
.nodes .menus { margin: 0 52px 0 9px; }
.tight { width: 310px; }
.tight .sq { background: #4c4c4c; width: 25px; }
.nodes .hdr .upb { margin-left: auto; background: #303030; color: #777; border-radius: 4px; }
.crumbs { display: flex; align-items: center; }
.crumbs .ch { width: 10px; }
.nodes .crumbs { height: 58px; }
.nodes .crumbs span { margin: 0 19px 0 9px; }
.nodes .crumbs .ic { margin-left: 10px; }
.nodes .crumbs .tail, .tail { margin-left: auto; }
.canvas { flex: 1; position: relative; }
.wireline { position: absolute; top: 489px; left: 22%; right: 22%; height: 3px; background: #25b98a; }
.node { position: absolute; top: 438px; width: 203px; height: 107px; background: #303030; border-radius: 6px; box-shadow: 0 2px 8px #000; font-size: 15px; line-height: 20px; }
.node.in { left: 22px; }
.node.out { right: 19px; }
.node h3 { font-weight: normal; font-size: 15px; height: 32px; line-height: 32px; background: #1a1a1a; padding-left: 16px; display: flex; gap: 7px; align-items: center; border-radius: 6px 6px 0 0; }
.node h3 svg { width: 14px; height: 20px; }
.node p { padding: 10px 15px; }
.in p { text-align: right; }
.sock { position: absolute; width: 14px; height: 14px; border-radius: 50%; top: 45px; background: #17dba0; border: 1px solid #111; }
.in .sock { right: -7px; }
.out .sock { left: -7px; }
.sock.empty { top: 77px; background: #2b2b2b; border: 2px solid #7c7c7c; }
.nodes > .hbar { background: #333; height: 4px; margin: 0 4px 2px 6px; }

/* outliner */
.outliner { flex: 290; background: #282828; }
.outliner .hdr { background: #2b2b2b; padding-left: 10px; }
.outliner .ib { width: 36px; margin-right: 9px; }
.search { display: flex; align-items: center; height: 24px; background: #1b1b1b; border: 1px solid #333; border-radius: 4px; flex: 1; min-width: 0; }
.search input { flex: 1; width: 0; }
.outliner .search { margin: 0 21px 0 14px; }
.cut { width: 12px; overflow: hidden; border-radius: 4px 0 0 4px; justify-content: flex-start; }
.olist { display: grid; grid-auto-rows: 1fr; height: 198px; margin-top: 4px; position: relative; }
.olist::before { content: ""; position: absolute; left: 36px; top: 56px; bottom: 2px; width: 1px; background: #666; }
.olist li { display: flex; align-items: center; padding-right: 14px; gap: 9px; }
.olist .sel { background: #2c4a83; color: #efb06a; }
.olist .tr { width: 10px; height: 20px; color: #ddd; }
.l0 { padding-left: 26px; }
.l1 { padding-left: 31px; }
.l2 { padding-left: 56px; }
.olist .d1 { margin-left: 16px; }
.olist .d2 { margin-left: 17px; }
.olist .cy { margin-left: -4px; }
.pill { background: #ffffff30; border-radius: 4px; box-shadow: 0 0 0 2px #ffffff30; }
.tog { margin-left: auto; display: flex; gap: 5px; align-items: center; color: #eee; }
.tog input { appearance: none; width: 13px; height: 13px; background: #eee; border-radius: 1px; margin-right: 3px; display: grid; place-items: center; }
.tog input::after { content: ""; width: 4px; height: 7px; border: solid #222; border-width: 0 2px 2px 0; rotate: 45deg; }
.or { color: #d28a50; }
.gr { color: #1fb880; }
.wr { color: #7f9fe6; }
.cy { color: #2fc3d8; }
.ph { color: #6a80b0; }
.rd { color: #b05560; }

/* properties */
.props { flex: 730; display: flex; background: #303030; }
.ptabs { width: 34px; background: #1c1c1c; color: #c4c4c4; flex: none; padding-top: 38px; display: flex; flex-direction: column; gap: 9px; }
.ptabs button { display: grid; place-items: center; width: 34px; height: 100%; }
.ptabs .t0 { height: 34px; }
.pg { display: grid; grid-auto-rows: 1fr; height: 34px; }
.five { height: 173px; }
.seven { height: 242px; }
.ptabs .on { background: #303030; border-radius: 4px 0 0 4px; }
.pmain { flex: 1; min-width: 0; padding: 4px 11px 0 10px; }
.phead { display: flex; justify-content: space-between; }
.phead .search { flex: none; width: 139px; margin-left: 49px; height: 22px; }
.phead .cb { background: #282828; border-radius: 4px; height: 22px; }
.props .crumbs { height: 48px; margin-top: 1px; padding: 0 2px; }
.props .crumbs span { margin: 0 13px 0 10px; }
.props .crumbs .ch + .ic { margin-left: 10px; }
.addmod { display: flex; width: 100%; height: 24px; align-items: center; justify-content: space-between; background: #282828; border-radius: 4px; padding: 0 3px 0 9px; margin-top: 8px; }
.panel { margin-top: 12px; border: 1px solid #4b607f; border-radius: 5px; background: #383838; height: 137px; padding: 4px 10px; }
.prow { display: flex; align-items: center; height: 24px; }
.prow .ch { margin-right: 6px; }
.prow .cb .ch { margin: 0; }
.prow .nm { width: 43px; height: 24px; background: #1d1d1d; margin-left: 12px; padding-left: 8px; border-radius: 4px 0 0 4px; }
.prow .sq { width: 23px; }
.prow .lit { color: #e0e0e0; }
.prow .cb { width: 22px; background: #222; }
.close { margin-left: 4px; height: 20px; }
.grip { width: 14px; height: 6px; margin-left: auto; border: dotted #999; border-width: 2px 0; }
.panel .idgroup { margin: 13px 0 10px; }
.panel .fld { background: #1d1d1d; }
.fold { display: flex; align-items: center; height: 31px; gap: 6px; padding-left: 16px; }

.status { display: flex; align-items: center; background: #181818; color: #969696; padding: 0 10px 0 11px; }
.status span { display: flex; align-items: center; gap: 10px; width: 264px; }
.status .ver { width: auto; margin-left: auto; }

/* popups */
.popup { position: absolute; background: #181818; box-shadow: 0 2px 6px #0008; border-radius: 4px; }
.add { left: 859px; top: 13px; width: 223px; padding-bottom: 5px; }
.add h2 { font-weight: normal; font-size: 13px; color: #999; line-height: 34px; padding-left: 9px; border-bottom: 1px solid #2e2e2e; }
.find { display: flex; width: 100%; height: 35px; align-items: center; padding-left: 12px; gap: 7px; border-bottom: 1px solid #2e2e2e; }
.popup ul { display: grid; grid-auto-rows: 1fr; padding: 0 4px; }
.add ul { height: 495px; margin-top: 5px; }
.popup li { display: flex; align-items: center; padding: 0 6px 0 35px; border-radius: 4px; white-space: nowrap; background-clip: padding-box; border-block: 1px solid transparent; }
.popup li span { flex: 1; }
.add li::after { content: ""; border: solid transparent; border-width: 4px 0 4px 7px; border-left-color: #999; }
.popup .on { background-color: #4772b3; color: #fff; }
.popup .on::after { border-left-color: #cfe0ff; }
u { text-underline-offset: 3px; text-decoration-thickness: 1px; }
.sub2 { left: 1082px; top: 233px; width: 222px; padding: 2px 0; }
.six { height: 150px; }
.sub2 .two { height: 54px; margin-top: 4px; border-top: 1px solid #2e2e2e; padding-top: 5px; }
.tip { position: absolute; left: 1235px; top: 325px; width: 446px; height: 47px; background: #191919; padding: 7px 10px; white-space: nowrap; border-radius: 4px; }
.pointer { position: absolute; left: 1256px; top: 293px; width: 56px; height: 78px; }
.caption { position: absolute; left: 0; right: 0; bottom: 60px; text-align: center; color: #fff; font: bold 18px/28px "Open Sans", "Noto Sans CJK SC", sans-serif; text-shadow: 0 0 3px #000, 1px 1px 3px #000, -1px -1px 2px #000; }
.caption [lang] { font: 21px/28px "Noto Sans CJK SC", sans-serif; }
```
